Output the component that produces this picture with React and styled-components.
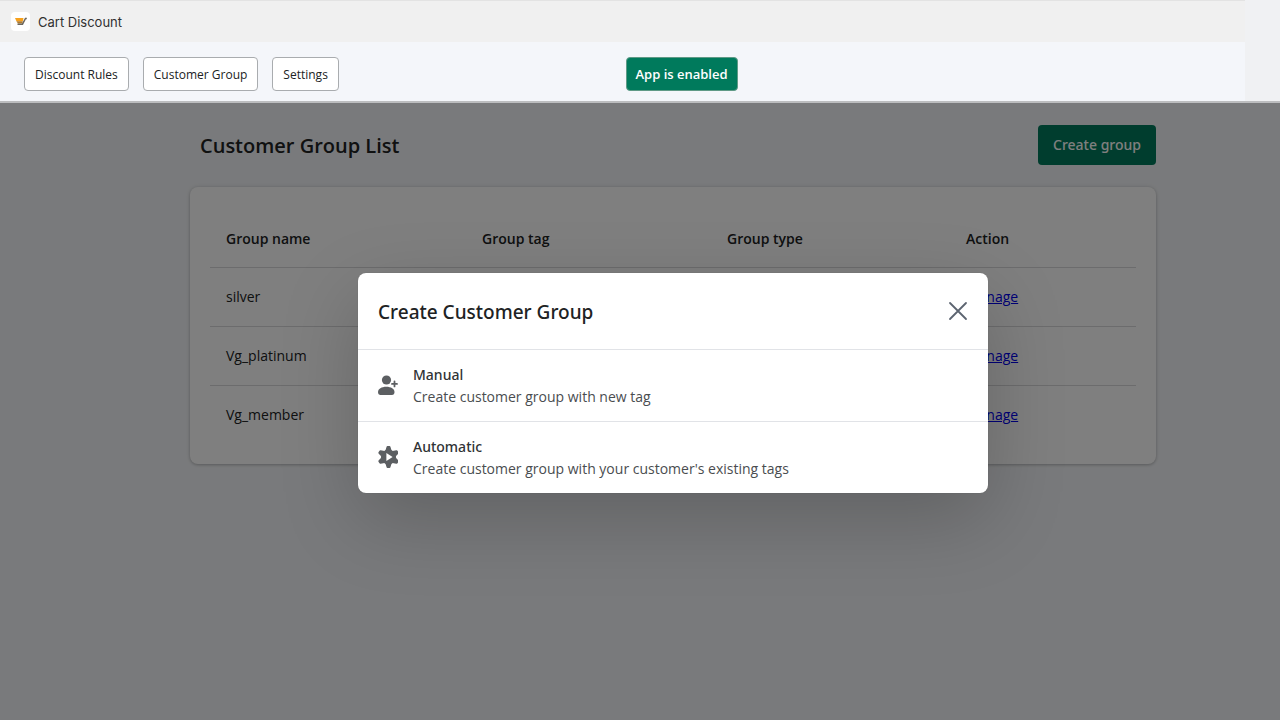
import React from 'react'
import styled, { createGlobalStyle } from 'styled-components'

const GlobalStyle = createGlobalStyle`
  :root {
    --medium: "Noto Sans", "Open Sans", sans-serif;
  }
  * {
    box-sizing: border-box;
  }
  body {
    margin: 0;
    color: #202223;
    font-family: "Open Sans", "Noto Sans", sans-serif;
  }
  button {
    font-family: inherit;
    cursor: pointer;
  }
`

const Page = styled.div`
  min-height: 100vh;
  display: flex;
  flex-direction: column;
  background-color: #f3f5f8;
`

const Header = styled.header`
  padding-right: 35px;
  background-color: #f0f1f3;
  border-bottom: 2px solid #bcbdbf;
`

const TitleBar = styled.div`
  display: flex;
  align-items: center;
  gap: 8px;
  height: 42px;
  padding: 0 11px;
  background-color: #f0f0f0;
  border-top: 1px solid #e3e3e3;
`

const AppName = styled.span`
  font-family: Inter, sans-serif;
  font-size: 13px;
  line-height: 20px;
  color: #303030;
`

const Toolbar = styled.div`
  display: grid;
  grid-template-columns: 1fr 1fr;
  align-items: center;
  justify-items: start;
  gap: 6px;
  padding: 15px 24px 10px;
  background-color: #f4f6fa;
`

const Nav = styled.nav`
  display: flex;
  gap: 14px;
`

const ToolButton = styled.button`
  height: 34px;
  padding: ${props => props.$primary ? '0 9px' : '2px 10px 0'};
  border: 1px solid ${props => props.$primary ? '#5f9a86' : '#a9acaf'};
  border-radius: 4px;
  background-color: ${props => props.$primary ? '#007a5c' : '#fff'};
  color: ${props => props.$primary ? '#fff' : '#202223'};
  font-size: ${props => props.$primary ? '13px' : '12px'};
  font-weight: ${props => props.$primary ? 600 : 400};
  line-height: 20px;
  white-space: nowrap;
`

const Stage = styled.div`
  position: relative;
  flex: 1;
  padding: 22px 0 40px 66px;
`

const Content = styled.main`
  max-width: 966px;
  margin: 0 auto;
`

const PageHead = styled.div`
  display: flex;
  align-items: center;
  justify-content: space-between;
  padding-left: 10px;
  margin-bottom: 22px;
`

const PageTitle = styled.h1`
  margin: 0;
  padding-top: 2px;
  font-size: 20px;
  font-weight: 600;
  line-height: 28px;
`

const CreateButton = styled.button`
  height: 40px;
  padding: 0 15px;
  border: 0;
  border-radius: 4px;
  background-color: #007a5c;
  color: #fff;
  font-family: var(--medium);
  font-size: 14px;
  font-weight: 500;
  line-height: 20px;
`

const Card = styled.section`
  padding: 22px 20px 20px;
  border-radius: 8px;
  background-color: #fff;
  box-shadow: 0 0 5px rgba(23, 24, 24, 0.1), 0 1px 3px rgba(0, 0, 0, 0.2);
`

const Table = styled.table`
  width: 100%;
  table-layout: fixed;
  border-collapse: collapse;
  font-size: 14px;
  line-height: 20px;
  text-align: left;
`

const Col = styled.col`
  width: ${props => props.$width};
`

const HeadCell = styled.th`
  height: 58px;
  padding: 2px 16px 0;
  border-bottom: 1px solid #d8d9db;
  font-weight: 600;
`

const Cell = styled.td`
  height: 59px;
  padding: 0 16px;
  border-bottom: 1px solid #d8d9db;

  tr:last-child > & {
    border-bottom: 0;
  }
`

const ManageLink = styled.a`
  color: #0000ee;
`

const Overlay = styled.div`
  position: absolute;
  inset: 0;
  display: flex;
  align-items: flex-start;
  justify-content: center;
  padding: 170px 0 0 66px;
  background-color: rgba(0, 0, 0, 0.5);
`

const Dialog = styled.div`
  width: 100%;
  max-width: 630px;
  overflow: hidden;
  border-radius: 8px;
  background-color: #fff;
  box-shadow: 0 26px 80px rgba(0, 0, 0, 0.2), 0 0 1px rgba(0, 0, 0, 0.2);
`

const DialogHead = styled.div`
  display: flex;
  align-items: center;
  justify-content: space-between;
  height: 76px;
  padding: 0 20px;
`

const DialogTitle = styled.h2`
  margin: 0;
  padding-top: 2px;
  font-family: var(--medium);
  font-size: 19px;
  font-weight: 500;
  line-height: 28px;
`

const CloseButton = styled.button`
  display: flex;
  padding: 0;
  border: 0;
  background: none;
  color: #5c6470;
`

const Option = styled.button`
  display: flex;
  align-items: center;
  gap: 15px;
  width: 100%;
  height: 72px;
  padding: 0 20px;
  border: 0;
  border-top: 1px solid #e1e3e7;
  background: none;
  color: #303335;
  font-size: 14px;
  line-height: 22px;
  text-align: left;
`

const OptionText = styled.span`
  display: flex;
  flex-direction: column;
`

const OptionName = styled.span`
  font-family: var(--medium);
  font-weight: 500;
`

const OptionHint = styled.span`
  color: #4a4d50;
`

const CartLogo = () => (
  <svg width="19" height="19" viewBox="0 0 19 19" aria-hidden="true">
    <rect width="19" height="19" rx="4" fill="#fff" />
    <path d="M4 6h8.5l-.7 3.2H5.4z" fill="#f7a11c" />
    <path d="M5.4 9.2h6.4l-.5 2.3H7z" fill="#b07a2c" />
    <path d="M6.5 12.2h5l3-5.7h1.3" fill="none" stroke="#6c665c" strokeWidth="1.5" />
  </svg>
)

const CloseIcon = () => (
  <svg width="20" height="20" viewBox="0 0 20 20" aria-hidden="true">
    <path d="M2 2l16 16M18 2L2 18" stroke="currentColor" strokeWidth="1.8" strokeLinecap="round" />
  </svg>
)

const PersonAddIcon = () => (
  <svg width="20" height="22" viewBox="0 0 20 22" fill="#5c5f62" aria-hidden="true">
    <circle cx="8.5" cy="5" r="4.6" />
    <path d="M0 17c0-3.200 3.600-5.300 8.300-5.300s8.200 2.100 8.200 5.300c0 1.900-.9 3-2.600 3H2.600c-1.700 0-2.600-1.100-2.600-3z" />
    <path d="M16.500 6.400v5M14 8.900h5" stroke="#5c5f62" strokeWidth="1.800" strokeLinecap="round" />
  </svg>
)

const gearAngles = [0, 60, 120, 180, 240, 300]

const GearPlayIcon = () => (
  <svg width="20" height="24" viewBox="0 0 20 24" fill="#5c5f62" aria-hidden="true">
    <circle cx="10.500" cy="11" r="7.600" />
    {gearAngles.map(angle => (
      <path key={angle} d="M7.400 4.600L8.500.9Q8.700 0 9.500 0h2q.8 0 1 .9l1.100 3.700z" transform={`rotate(${angle} 10.5 11)`} />
    ))}
    <path d="M8.400 7v8l6.200-4z" fill="#fff" />
  </svg>
)

const groups = [
  { name: 'silver' },
  { name: 'Vg_platinum' },
  { name: 'Vg_member' }
]

const options = [
  { name: 'Manual', hint: 'Create customer group with new tag', Icon: PersonAddIcon },
  { name: 'Automatic', hint: "Create customer group with your customer's existing tags", Icon: GearPlayIcon }
]

export default function App() {
  return (
    <Page>
      <GlobalStyle />
      <Header>
        <TitleBar>
          <CartLogo />
          <AppName>Cart Discount</AppName>
        </TitleBar>
        <Toolbar>
          <Nav>
            <ToolButton>Discount Rules</ToolButton>
            <ToolButton>Customer Group</ToolButton>
            <ToolButton>Settings</ToolButton>
          </Nav>
          <ToolButton $primary>App is enabled</ToolButton>
        </Toolbar>
      </Header>
      <Stage>
        <Content>
          <PageHead>
            <PageTitle>Customer Group List</PageTitle>
            <CreateButton>Create group</CreateButton>
          </PageHead>
          <Card>
            <Table>
              <colgroup>
                <Col $width="256px" />
                <Col $width="245px" />
                <Col $width="239px" />
                <Col />
              </colgroup>
              <thead>
                <tr>
                  <HeadCell scope="col">Group name</HeadCell>
                  <HeadCell scope="col">Group tag</HeadCell>
                  <HeadCell scope="col">Group type</HeadCell>
                  <HeadCell scope="col">Action</HeadCell>
                </tr>
              </thead>
              <tbody>
                {groups.map(group => (
                  <tr key={group.name}>
                    <Cell>{group.name}</Cell>
                    <Cell />
                    <Cell />
                    <Cell><ManageLink href="#manage">Manage</ManageLink></Cell>
                  </tr>
                ))}
              </tbody>
            </Table>
          </Card>
        </Content>
        <Overlay>
          <Dialog role="dialog" aria-modal="true" aria-labelledby="dialog-title">
            <DialogHead>
              <DialogTitle id="dialog-title">Create Customer Group</DialogTitle>
              <CloseButton aria-label="Close"><CloseIcon /></CloseButton>
            </DialogHead>
            {options.map(({ name, hint, Icon }) => (
              <Option key={name}>
                <Icon />
                <OptionText>
                  <OptionName>{name}</OptionName>
                  <OptionHint>{hint}</OptionHint>
                </OptionText>
              </Option>
            ))}
          </Dialog>
        </Overlay>
      </Stage>
    </Page>
  )
}
